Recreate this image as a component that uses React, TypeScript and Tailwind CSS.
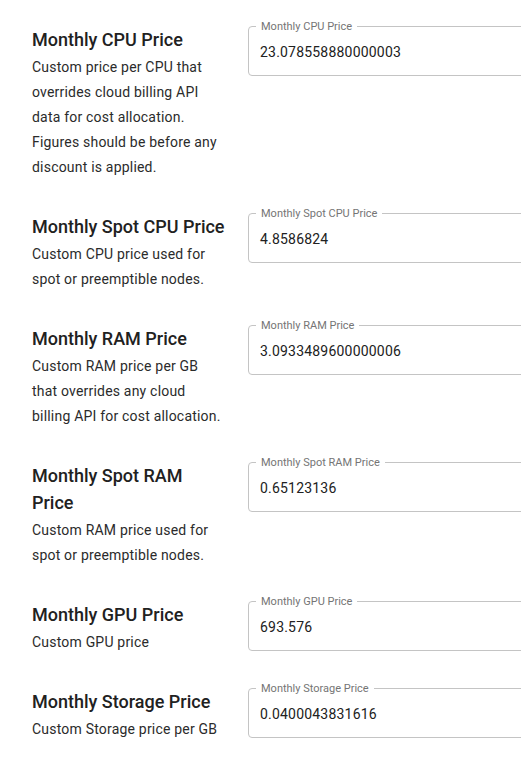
import React from "react";

interface PriceSetting {
  title: string;
  description: string;
  label: string;
  value: string;
}

const settings: PriceSetting[] = [
  {
    title: "Monthly CPU Price",
    description:
      "Custom price per CPU that overrides cloud billing API data for cost allocation. Figures should be before any discount is applied.",
    label: "Monthly CPU Price",
    value: "23.078558880000003",
  },
  {
    title: "Monthly Spot CPU Price",
    description: "Custom CPU price used for spot or preemptible nodes.",
    label: "Monthly Spot CPU Price",
    value: "4.8586824",
  },
  {
    title: "Monthly RAM Price",
    description:
      "Custom RAM price per GB that overrides any cloud billing API for cost allocation.",
    label: "Monthly RAM Price",
    value: "3.0933489600000006",
  },
  {
    title: "Monthly Spot RAM Price",
    description: "Custom RAM price used for spot or preemptible nodes.",
    label: "Monthly Spot RAM Price",
    value: "0.65123136",
  },
  {
    title: "Monthly GPU Price",
    description: "Custom GPU price",
    label: "Monthly GPU Price",
    value: "693.576",
  },
  {
    title: "Monthly Storage Price",
    description: "Custom Storage price per GB",
    label: "Monthly Storage Price",
    value: "0.0400043831616",
  },
];

function OutlinedField({ label, value }: { label: string; value: string }) {
  return (
    <div className="relative h-[50px] w-[320px] shrink-0 rounded border border-[#c4c4c4]">
      <span className="absolute left-[7px] top-[-7px] bg-white px-[5px] text-[11px] leading-[13px] text-[#757575]">
        {label}
      </span>
      <div className="flex h-full items-center pl-[11px] pt-[2px] text-[14px] tracking-[0.2px] text-[#212121]">
        {value}
      </div>
    </div>
  );
}

export default function App() {
  return (
    <div
      className="min-h-screen bg-white"
      style={{ fontFamily: "Roboto, 'Liberation Sans', sans-serif" }}
    >
      <div className="w-[521px] overflow-hidden pt-[26px] pl-8">
        <div className="flex flex-col gap-[33px]">
          {settings.map((s) => (
            <div key={s.title} className="flex items-start gap-[22px]">
              <div className="w-[194px] shrink-0">
                <h3 className="text-[18px] font-medium leading-[27px] text-[#212121]">
                  {s.title}
                </h3>
                <p className="mt-[2px] text-[14px] leading-[25px] tracking-[0.2px] text-[#2b2b2b]">
                  {s.description}
                </p>
              </div>
              <OutlinedField label={s.label} value={s.value} />
            </div>
          ))}
        </div>
      </div>
    </div>
  );
}
